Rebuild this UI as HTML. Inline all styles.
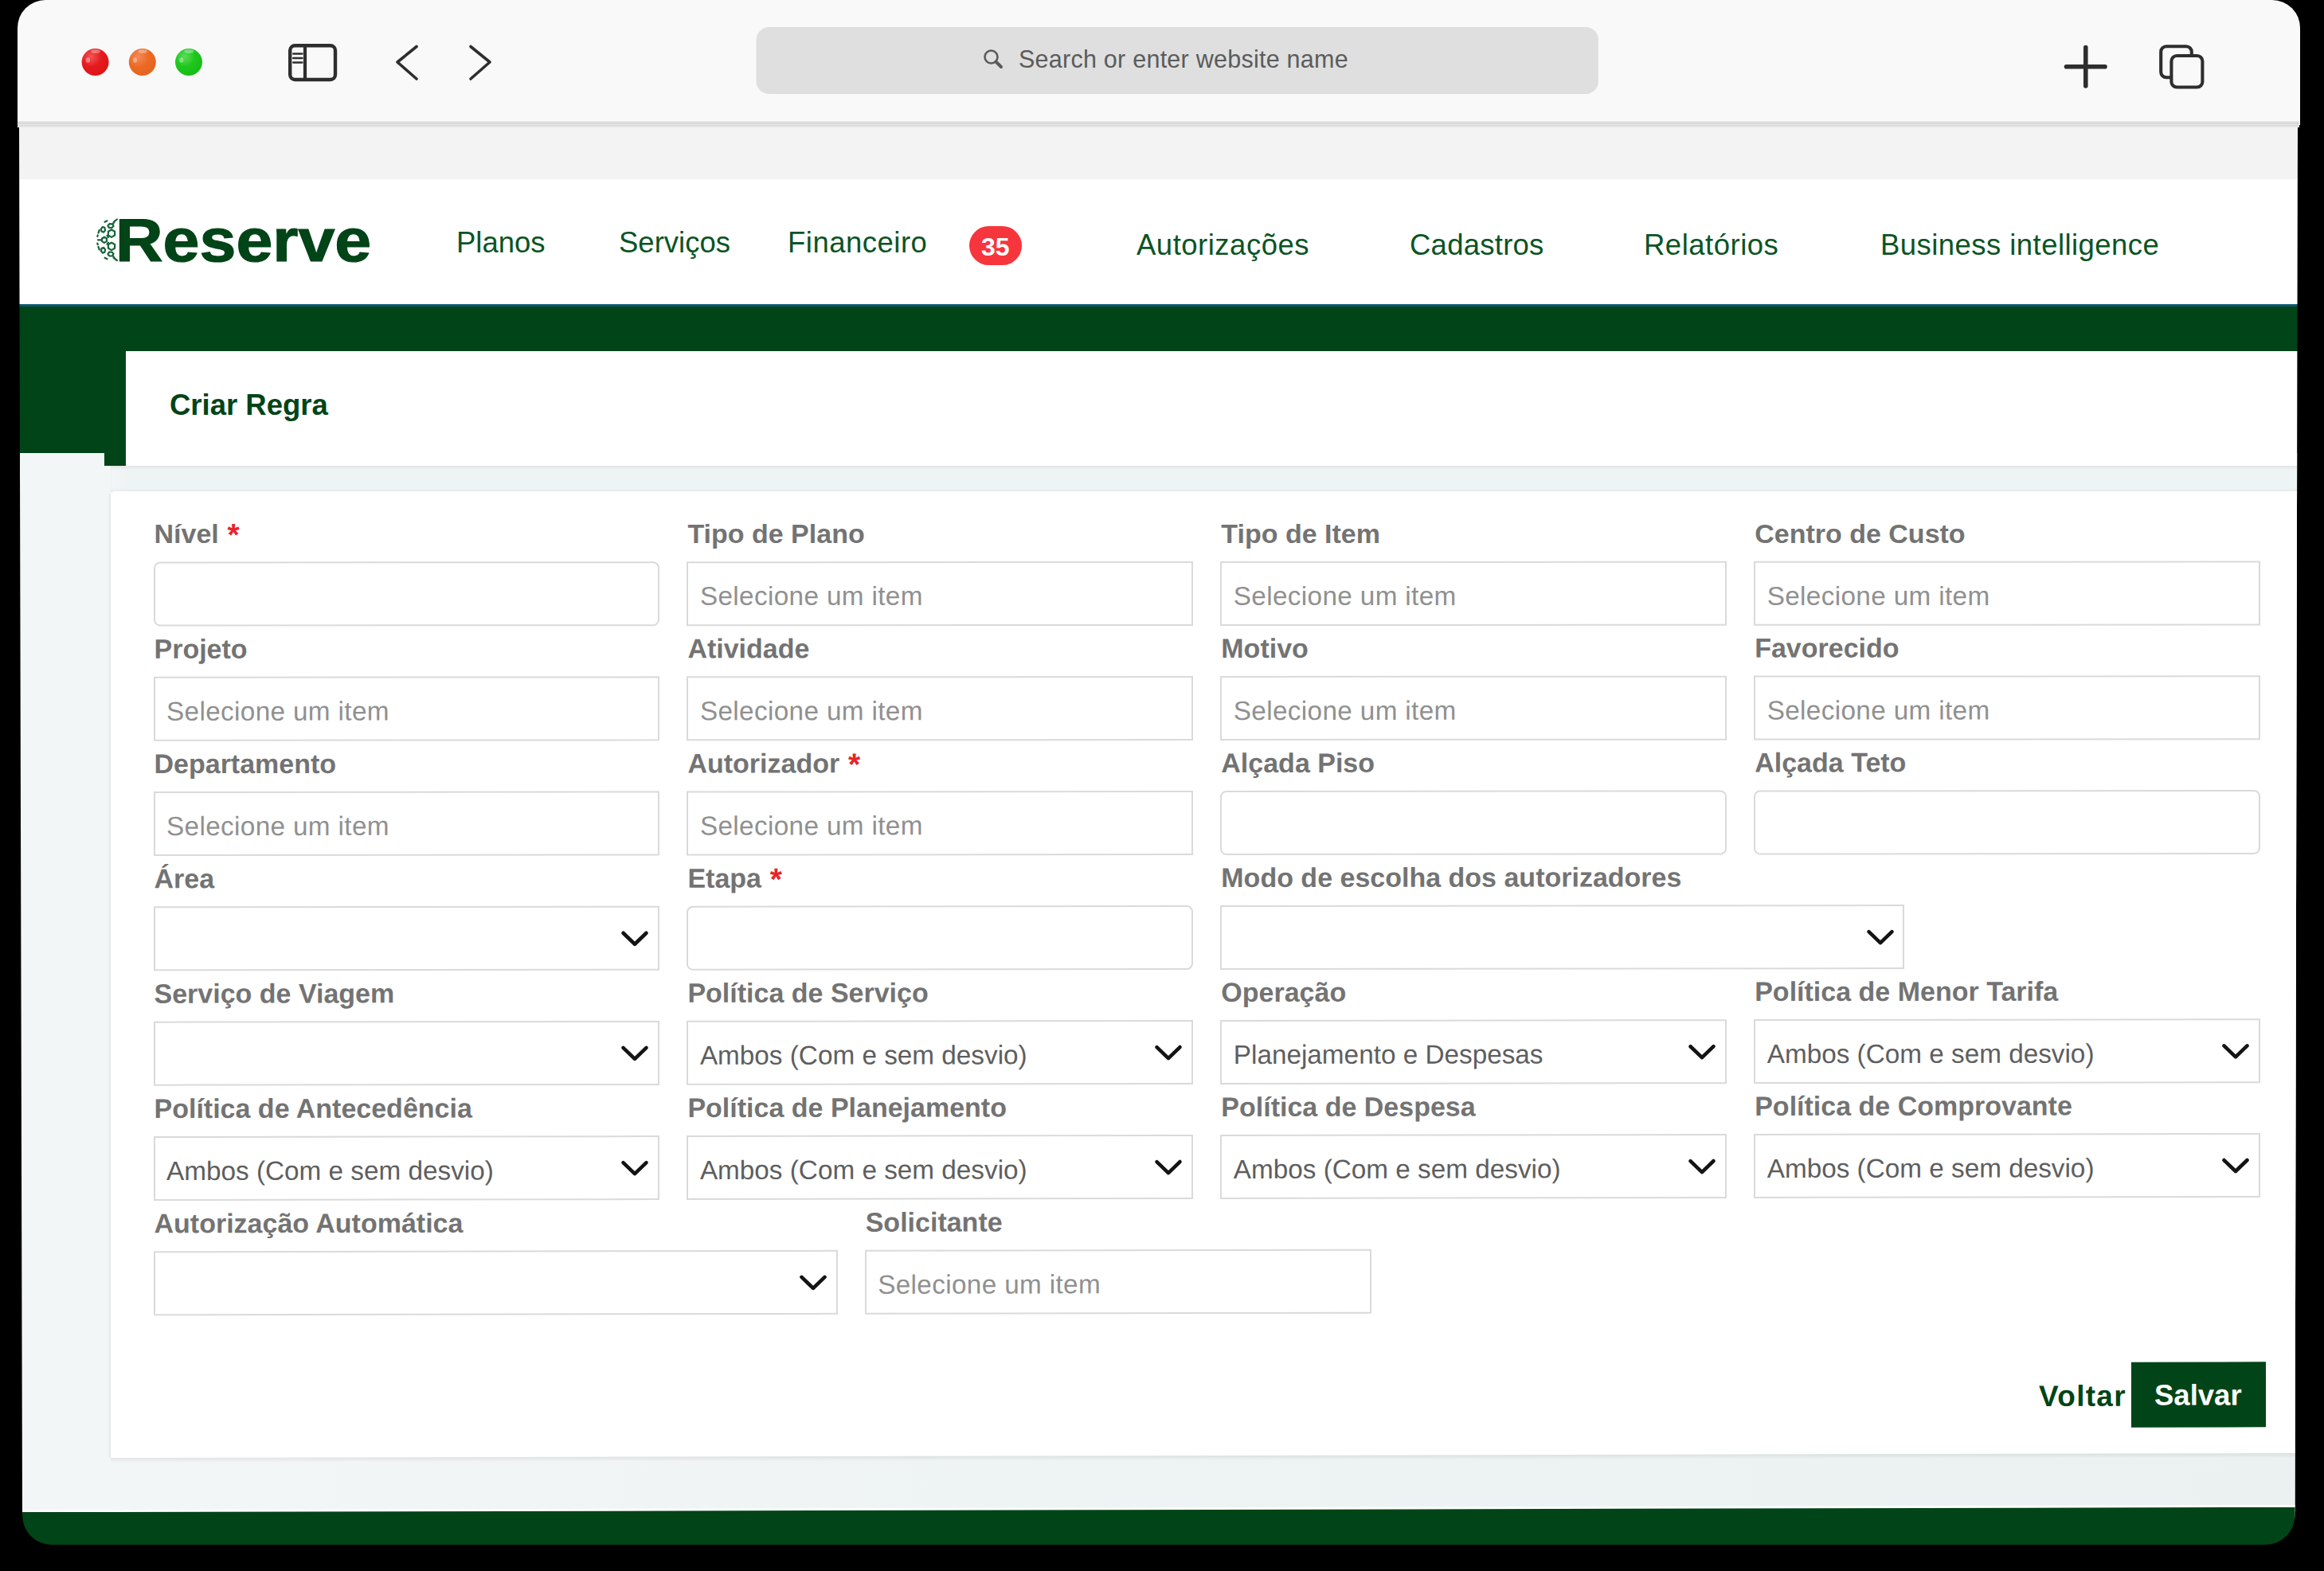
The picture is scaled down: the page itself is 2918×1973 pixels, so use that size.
<!DOCTYPE html>
<html>
<head>
<meta charset="utf-8">
<style>
html,body{margin:0;padding:0;}
body{width:2918px;height:1973px;background:#000;position:relative;overflow:hidden;font-family:"Liberation Sans",sans-serif;}
.a{position:absolute;box-sizing:border-box;}
.t{position:absolute;white-space:pre;line-height:1;}
#win{position:absolute;left:0;top:0;width:2918px;height:1973px;}
#page{position:absolute;left:0;top:0;width:2918px;height:1973px;clip-path:path("M 24,150 L 2885,150 L 2881.5,1903 A 37,37 0 0 1 2844.5,1940 L 65,1940 A 37,37 0 0 1 28,1903 Z");}
#toolbar{left:22px;top:0;width:2865.6px;height:157px;background:#f9f9f9;border-radius:35px 35px 0 0;}
#tbline{left:22px;top:152px;width:2865px;height:8px;background:linear-gradient(#ededed,#d4d4d4 35%,#e6e6e6 55%,#d9d9d9 75%,#f0f0f0);}
#band{left:20px;top:158px;width:2870px;height:67px;background:#f3f3f3;}
#hdr{left:20px;top:225px;width:2870px;height:157px;background:#fff;}
#blue{left:20px;top:381.5px;width:2870px;height:3.5px;background:#07596f;}
#green{left:20px;top:385px;width:2870px;height:56px;background:#014417;}
#gblock{left:20px;top:441px;width:138px;height:128px;background:#014417;}
#gstrip{left:131px;top:569px;width:27px;height:16px;background:#014417;}
#content{left:20px;top:569px;width:2870px;height:1330px;background:#f3f6f6;}
#strip1{left:139px;top:585px;width:2751px;height:33px;background:linear-gradient(90deg,rgba(238,243,243,0) 0,#eef3f3 20px);box-shadow:inset 0 4px 4px -2px rgba(0,0,0,0.07),inset 0 -4px 4px -2px rgba(0,0,0,0.06);}
#strip2{left:139px;top:1818px;width:2751px;height:90px;background:linear-gradient(90deg,#f3f6f6,#eef3f3 40%,#ebf1f1);}
#titlep{left:158px;top:441px;width:2732px;height:144px;background:#fff;}
#panel{left:139px;top:617px;width:2751px;height:1220px;background:#fff;border-radius:5px 0 0 0;clip-path:polygon(0 0,100% 0,100% 1208px,0 1214px);}
#pshadow{left:135px;top:620px;width:4px;height:1211px;background:linear-gradient(90deg,rgba(0,0,0,0) ,rgba(0,0,0,0.06));}
#bshadow{left:139px;top:1828px;width:2751px;height:6px;background:linear-gradient(rgba(0,0,0,0.075),rgba(0,0,0,0));transform-origin:1375px 0;transform:skewY(-0.1229deg);}
#footer{left:20px;top:1895.8px;width:2870px;height:60px;background:#014417;transform-origin:1494px 0;transform:skewY(-0.1294deg);}
#fline{left:20px;top:1893.3px;width:2870px;height:2.5px;background:#fbfdfd;transform-origin:1494px 0;transform:skewY(-0.1294deg);}
.sk{position:absolute;left:0;top:0;width:2918px;height:1973px;transform-origin:1514px 0;}
.nav{font-size:36.5px;color:#0b5424;}
.lab{font-size:34px;font-weight:700;color:#737373;}
.req{color:#e8242a;font-size:39px;line-height:0;position:relative;top:2.5px;}
.inp{border:2px solid #dadada;background:#fff;}
.ph{font-size:33.3px;color:#909090;letter-spacing:0.35px;}
.val{font-size:33.3px;color:#5e5e5e;}
</style>
</head>
<body>
<div id="win">
  <div class="a" id="toolbar"></div>
  <div id="page">
  <div class="a" id="content"></div>
  <div class="a" id="strip1"></div>
  <div class="a" id="strip2"></div>
  <div class="a" id="band"></div>
  <div class="a" id="hdr"></div>
  <div class="a" id="blue"></div>
  <div class="a" id="green"></div>
  <div class="a" id="gblock"></div>
  <div class="a" id="gstrip"></div>
  <div class="a" id="titlep"></div>
  <div class="a" id="pshadow"></div>
  <div class="a" id="panel"></div>
  <div class="a" id="bshadow"></div>
  <div class="a" id="fline"></div>
  <div class="a" id="footer"></div>
  </div>
  <div class="a" id="tbline"></div>
  <svg class="a" style="left:0;top:0" width="2918" height="160" viewBox="0 0 2918 160">
    <defs>
      <radialGradient id="gr" cx="35%" cy="30%" r="75%"><stop offset="0" stop-color="#f25555"/><stop offset="0.5" stop-color="#e51a1d"/><stop offset="1" stop-color="#dd1418"/></radialGradient>
      <radialGradient id="go" cx="35%" cy="30%" r="75%"><stop offset="0" stop-color="#f58a5a"/><stop offset="0.5" stop-color="#eb6b25"/><stop offset="1" stop-color="#e46420"/></radialGradient>
      <radialGradient id="gg" cx="35%" cy="30%" r="75%"><stop offset="0" stop-color="#5cdc5a"/><stop offset="0.5" stop-color="#1ec71c"/><stop offset="1" stop-color="#18bb18"/></radialGradient>
    </defs>
    <circle cx="119.6" cy="78" r="17" fill="url(#gr)"/>
    <circle cx="178.8" cy="78" r="17" fill="url(#go)"/>
    <circle cx="237" cy="78" r="17" fill="url(#gg)"/>
    <g fill="#ffffff" opacity="0.35">
      <ellipse cx="110.5" cy="75.5" rx="2.6" ry="3.2"/>
      <ellipse cx="169.6" cy="75.5" rx="2.6" ry="3.2"/>
      <ellipse cx="227.8" cy="75.5" rx="2.6" ry="3.2"/>
      <ellipse cx="120" cy="64.5" rx="6" ry="2.4"/>
      <ellipse cx="179.2" cy="64.5" rx="6" ry="2.4"/>
      <ellipse cx="237.4" cy="64.5" rx="6" ry="2.4"/>
    </g>
    <g fill="none" stroke="#2e2e2e" stroke-linecap="round" stroke-linejoin="round">
      <rect x="364.2" y="57.2" width="56.8" height="42.8" rx="6.2" stroke-width="4.4"/>
      <line x1="383" y1="58" x2="383" y2="100" stroke-width="4.2"/>
      <line x1="368.3" y1="67.5" x2="379.3" y2="67.5" stroke-width="2.6"/>
      <line x1="368.3" y1="73" x2="379.3" y2="73" stroke-width="2.6"/>
      <line x1="368.3" y1="78.5" x2="379.3" y2="78.5" stroke-width="2.6"/>
      <polyline points="523,58.5 499,78 523,99" stroke-width="3.6"/>
      <polyline points="591,58.5 615,78 591,99" stroke-width="3.6"/>
      <line x1="2618.8" y1="59.5" x2="2618.8" y2="108" stroke-width="5.6"/>
      <line x1="2594.5" y1="83.7" x2="2643" y2="83.7" stroke-width="5.6"/>
      <path d="M2724.5,97.3 H2720 a6.8,6.8 0 0 1 -6.8,-6.8 V65 a6.8,6.8 0 0 1 6.8,-6.8 H2745 a6.8,6.8 0 0 1 6.8,6.8 V70" stroke-width="4.1"/>
      <rect x="2726.4" y="70" width="39" height="39.5" rx="6.8" stroke-width="4.1"/>
    </g>
    <rect x="949.5" y="34" width="1057.5" height="84" rx="16" fill="#dfdfdf"/>
    <g fill="none" stroke="#5a5a5a" stroke-linecap="round">
      <circle cx="1244.5" cy="71.5" r="8" stroke-width="2.6"/>
      <line x1="1250.5" y1="77.5" x2="1257" y2="84" stroke-width="4"/>
    </g>
  </svg>
  <div class="t" style="left:1279px;top:58.6px;font-size:30.5px;color:#5b5b5b;letter-spacing:0.25px;">Search or enter website name</div>
  <div class="t" style="left:145px;top:263.5px;font-size:76px;font-weight:700;color:#014417;-webkit-text-stroke:1.2px #014417;transform-origin:0 0;transform:scaleX(1.086)">Reserve</div>
  <div class="t nav" style="left:573px;top:286.9px">Planos</div>
  <div class="t nav" style="left:777px;top:286.9px">Serviços</div>
  <div class="t nav" style="left:989px;top:286.9px;letter-spacing:0.5px">Financeiro</div>
  <div class="a" style="left:1216.5px;top:284px;width:66.5px;height:49px;border-radius:24.5px;background:#f7353d"></div>
  <div class="t" style="left:1232px;top:294px;font-size:32px;font-weight:700;color:#fff">35</div>
  <div class="t nav" style="left:1427px;top:289.9px;letter-spacing:0.5px">Autorizações</div>
  <div class="t nav" style="left:1770px;top:289.9px;letter-spacing:0.25px">Cadastros</div>
  <div class="t nav" style="left:2064px;top:289.9px;letter-spacing:0.5px">Relatórios</div>
  <div class="t nav" style="left:2361px;top:289.9px;letter-spacing:0.45px">Business intelligence</div>
  <div class="t" style="left:213px;top:491px;font-size:36.5px;font-weight:700;color:#014417">Criar Regra</div>
  <svg class="a" style="left:115px;top:268px" width="36" height="66" viewBox="0 0 36 66"><g fill="none" stroke="#17653a" stroke-width="2.2" stroke-linejoin="round" stroke-linecap="round"><path d="M29.1,27.5 L25.0,29.9 L20.9,27.5 L20.9,22.8 L25.0,20.5 L29.1,22.8Z M29.1,43.7 L25.0,46.1 L20.9,43.7 L20.9,39.0 L25.0,36.7 L29.1,39.0Z M27.6,15.8 L25.5,18.1 L21.9,17.9 L20.4,15.4 L22.5,13.1 L26.1,13.3Z M26.1,53.3 L22.5,53.5 L20.4,51.2 L21.9,48.7 L25.5,48.5 L27.6,50.8Z M17.1,21.2 L15.2,23.6 L12.6,22.7 L11.9,19.4 L13.8,17.0 L16.4,17.9Z M16.4,48.7 L13.8,49.6 L11.9,47.2 L12.6,43.9 L15.2,43.0 L17.1,45.4Z M18.9,35.1 L16.0,36.9 L13.1,35.1 L13.1,31.5 L16.0,29.7 L18.9,31.5Z"/><path d="M8.0,33.3 L12.3,33.3 M19.5,28.0 L21.0,30.0 M19.5,38.6 L21.0,36.6 M27.5,11.0 L32.0,7.5 M27.5,55.6 L32.0,59.0 M26.8,13.5 L29.5,9.0 M26.8,53.0 L29.5,57.5 M16.5,10.8 L19.5,9.3 M16.5,55.8 L19.5,57.3 M8.5,24.5 L9.8,21.0 M8.5,42.0 L9.8,45.5 M7.3,29.0 L7.8,27.5 M7.3,37.6 L7.8,39.1"/></g></svg>
<div class="sk" style="transform:skewY(-0.0172deg)">
<div class="t lab" style="left:193.5px;top:653.1px">Nível<span class="req"> *</span></div>
<div class="a inp" style="left:192.5px;top:705px;width:635.9px;height:81px;border-radius:8px"></div>
<div class="t lab" style="left:863.4px;top:653.1px">Tipo de Plano</div>
<div class="a inp" style="left:862.4px;top:705px;width:635.9px;height:81px;border-radius:0px"></div>
<div class="t ph" style="left:878.9px;top:732.2px">Selecione um item</div>
<div class="t lab" style="left:1533.3px;top:653.1px">Tipo de Item</div>
<div class="a inp" style="left:1532.3px;top:705px;width:635.9px;height:81px;border-radius:0px"></div>
<div class="t ph" style="left:1548.8px;top:732.2px">Selecione um item</div>
<div class="t lab" style="left:2203.2px;top:653.1px">Centro de Custo</div>
<div class="a inp" style="left:2202.2px;top:705px;width:635.9px;height:81px;border-radius:0px"></div>
<div class="t ph" style="left:2218.7px;top:732.2px">Selecione um item</div>
</div>
<div class="sk" style="transform:skewY(-0.0313deg)">
<div class="t lab" style="left:193.5px;top:797.1px">Projeto</div>
<div class="a inp" style="left:192.5px;top:849px;width:635.9px;height:81px;border-radius:0px"></div>
<div class="t ph" style="left:209px;top:876.2px">Selecione um item</div>
<div class="t lab" style="left:863.4px;top:797.1px">Atividade</div>
<div class="a inp" style="left:862.4px;top:849px;width:635.9px;height:81px;border-radius:0px"></div>
<div class="t ph" style="left:878.9px;top:876.2px">Selecione um item</div>
<div class="t lab" style="left:1533.3px;top:797.1px">Motivo</div>
<div class="a inp" style="left:1532.3px;top:849px;width:635.9px;height:81px;border-radius:0px"></div>
<div class="t ph" style="left:1548.8px;top:876.2px">Selecione um item</div>
<div class="t lab" style="left:2203.2px;top:797.1px">Favorecido</div>
<div class="a inp" style="left:2202.2px;top:849px;width:635.9px;height:81px;border-radius:0px"></div>
<div class="t ph" style="left:2218.7px;top:876.2px">Selecione um item</div>
</div>
<div class="sk" style="transform:skewY(-0.0453deg)">
<div class="t lab" style="left:193.5px;top:941.1px">Departamento</div>
<div class="a inp" style="left:192.5px;top:993px;width:635.9px;height:81px;border-radius:0px"></div>
<div class="t ph" style="left:209px;top:1020.2px">Selecione um item</div>
<div class="t lab" style="left:863.4px;top:941.1px">Autorizador<span class="req"> *</span></div>
<div class="a inp" style="left:862.4px;top:993px;width:635.9px;height:81px;border-radius:0px"></div>
<div class="t ph" style="left:878.9px;top:1020.2px">Selecione um item</div>
<div class="t lab" style="left:1533.3px;top:941.1px">Alçada Piso</div>
<div class="a inp" style="left:1532.3px;top:993px;width:635.9px;height:81px;border-radius:8px"></div>
<div class="t lab" style="left:2203.2px;top:941.1px">Alçada Teto</div>
<div class="a inp" style="left:2202.2px;top:993px;width:635.9px;height:81px;border-radius:8px"></div>
</div>
<div class="sk" style="transform:skewY(-0.0594deg)">
<div class="t lab" style="left:193.5px;top:1085.1px">Área</div>
<div class="a inp" style="left:192.5px;top:1137px;width:635.9px;height:81px;border-radius:0px"></div>
<svg class="a" style="left:777.4px;top:1161.5px" width="40" height="32" viewBox="0 0 40 32"><polyline points="5.5,9 20,23 34.5,9" fill="none" stroke="#141414" stroke-width="4.6" stroke-linecap="round" stroke-linejoin="round"/></svg>
<div class="t lab" style="left:863.4px;top:1085.1px">Etapa<span class="req"> *</span></div>
<div class="a inp" style="left:862.4px;top:1137px;width:635.9px;height:81px;border-radius:8px"></div>
<div class="t lab" style="left:1533.3px;top:1085.1px">Modo de escolha dos autorizadores</div>
<div class="a inp" style="left:1532.3px;top:1137px;width:859.2px;height:81px;border-radius:0px"></div>
<svg class="a" style="left:2340.5px;top:1161.5px" width="40" height="32" viewBox="0 0 40 32"><polyline points="5.5,9 20,23 34.5,9" fill="none" stroke="#141414" stroke-width="4.6" stroke-linecap="round" stroke-linejoin="round"/></svg>
</div>
<div class="sk" style="transform:skewY(-0.0734deg)">
<div class="t lab" style="left:193.5px;top:1229.1px">Serviço de Viagem</div>
<div class="a inp" style="left:192.5px;top:1281px;width:635.9px;height:81px;border-radius:0px"></div>
<svg class="a" style="left:777.4px;top:1305.5px" width="40" height="32" viewBox="0 0 40 32"><polyline points="5.5,9 20,23 34.5,9" fill="none" stroke="#141414" stroke-width="4.6" stroke-linecap="round" stroke-linejoin="round"/></svg>
<div class="t lab" style="left:863.4px;top:1229.1px">Política de Serviço</div>
<div class="a inp" style="left:862.4px;top:1281px;width:635.9px;height:81px;border-radius:0px"></div>
<div class="t val" style="left:878.9px;top:1308.19px">Ambos (Com e sem desvio)</div>
<svg class="a" style="left:1447.3px;top:1305.5px" width="40" height="32" viewBox="0 0 40 32"><polyline points="5.5,9 20,23 34.5,9" fill="none" stroke="#141414" stroke-width="4.6" stroke-linecap="round" stroke-linejoin="round"/></svg>
<div class="t lab" style="left:1533.3px;top:1229.1px">Operação</div>
<div class="a inp" style="left:1532.3px;top:1281px;width:635.9px;height:81px;border-radius:0px"></div>
<div class="t val" style="left:1548.8px;top:1308.19px">Planejamento e Despesas</div>
<svg class="a" style="left:2117.2px;top:1305.5px" width="40" height="32" viewBox="0 0 40 32"><polyline points="5.5,9 20,23 34.5,9" fill="none" stroke="#141414" stroke-width="4.6" stroke-linecap="round" stroke-linejoin="round"/></svg>
<div class="t lab" style="left:2203.2px;top:1229.1px">Política de Menor Tarifa</div>
<div class="a inp" style="left:2202.2px;top:1281px;width:635.9px;height:81px;border-radius:0px"></div>
<div class="t val" style="left:2218.7px;top:1308.19px">Ambos (Com e sem desvio)</div>
<svg class="a" style="left:2787.1px;top:1305.5px" width="40" height="32" viewBox="0 0 40 32"><polyline points="5.5,9 20,23 34.5,9" fill="none" stroke="#141414" stroke-width="4.6" stroke-linecap="round" stroke-linejoin="round"/></svg>
</div>
<div class="sk" style="transform:skewY(-0.0875deg)">
<div class="t lab" style="left:193.5px;top:1373.1px">Política de Antecedência</div>
<div class="a inp" style="left:192.5px;top:1425px;width:635.9px;height:81px;border-radius:0px"></div>
<div class="t val" style="left:209px;top:1452.19px">Ambos (Com e sem desvio)</div>
<svg class="a" style="left:777.4px;top:1449.5px" width="40" height="32" viewBox="0 0 40 32"><polyline points="5.5,9 20,23 34.5,9" fill="none" stroke="#141414" stroke-width="4.6" stroke-linecap="round" stroke-linejoin="round"/></svg>
<div class="t lab" style="left:863.4px;top:1373.1px">Política de Planejamento</div>
<div class="a inp" style="left:862.4px;top:1425px;width:635.9px;height:81px;border-radius:0px"></div>
<div class="t val" style="left:878.9px;top:1452.19px">Ambos (Com e sem desvio)</div>
<svg class="a" style="left:1447.3px;top:1449.5px" width="40" height="32" viewBox="0 0 40 32"><polyline points="5.5,9 20,23 34.5,9" fill="none" stroke="#141414" stroke-width="4.6" stroke-linecap="round" stroke-linejoin="round"/></svg>
<div class="t lab" style="left:1533.3px;top:1373.1px">Política de Despesa</div>
<div class="a inp" style="left:1532.3px;top:1425px;width:635.9px;height:81px;border-radius:0px"></div>
<div class="t val" style="left:1548.8px;top:1452.19px">Ambos (Com e sem desvio)</div>
<svg class="a" style="left:2117.2px;top:1449.5px" width="40" height="32" viewBox="0 0 40 32"><polyline points="5.5,9 20,23 34.5,9" fill="none" stroke="#141414" stroke-width="4.6" stroke-linecap="round" stroke-linejoin="round"/></svg>
<div class="t lab" style="left:2203.2px;top:1373.1px">Política de Comprovante</div>
<div class="a inp" style="left:2202.2px;top:1425px;width:635.9px;height:81px;border-radius:0px"></div>
<div class="t val" style="left:2218.7px;top:1452.19px">Ambos (Com e sem desvio)</div>
<svg class="a" style="left:2787.1px;top:1449.5px" width="40" height="32" viewBox="0 0 40 32"><polyline points="5.5,9 20,23 34.5,9" fill="none" stroke="#141414" stroke-width="4.6" stroke-linecap="round" stroke-linejoin="round"/></svg>
</div>
<div class="sk" style="transform:skewY(-0.1016deg)">
<div class="t lab" style="left:193.5px;top:1517.1px">Autorização Automática</div>
<div class="a inp" style="left:192.5px;top:1569px;width:859.2px;height:81px;border-radius:0px"></div>
<svg class="a" style="left:1000.7px;top:1593.5px" width="40" height="32" viewBox="0 0 40 32"><polyline points="5.5,9 20,23 34.5,9" fill="none" stroke="#141414" stroke-width="4.6" stroke-linecap="round" stroke-linejoin="round"/></svg>
<div class="t lab" style="left:1086.7px;top:1517.1px">Solicitante</div>
<div class="a inp" style="left:1085.7px;top:1569px;width:635.9px;height:81px;border-radius:0px"></div>
<div class="t ph" style="left:1102.2px;top:1596.19px">Selecione um item</div>
</div>
<div class="sk" style="transform:skewY(-0.1153deg)">
<div class="t" style="left:2560px;top:1737.05px;font-size:37px;font-weight:700;color:#014417;letter-spacing:1.3px">Voltar</div>
<div class="a" style="left:2676px;top:1712.5px;width:169px;height:82px;background:#014417"></div>
<div class="t" style="left:2705px;top:1737.47px;font-size:36.5px;font-weight:700;color:#fff">Salvar</div>
</div>

</div>
</body>
</html>
